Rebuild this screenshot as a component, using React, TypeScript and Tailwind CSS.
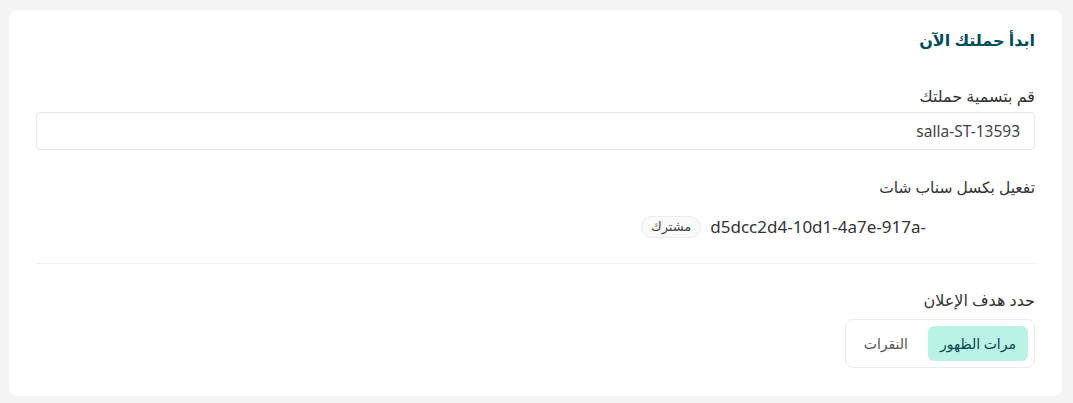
import React from 'react';

const App: React.FC = () => {
  return (
    <div className="min-h-[403px] w-full bg-[#f4f4f4] pt-[10px] pl-[9px] pr-[11px] font-['Noto_Sans','DejaVu_Sans',sans-serif]" dir="rtl">
      <div className="bg-white rounded-lg px-[27px] pt-[12px] pb-[28px]">
        <h2 className="text-[16px] leading-[36px] font-bold text-[#004d5a]">ابدأ حملتك الآن</h2>

        {/* campaign name */}
        <div className="mt-[27px]">
          <label className="block text-[16px] leading-[22px] text-[#333]">قم بتسمية حملتك</label>
          <input
            readOnly
            value="salla-ST-13593"
            dir="ltr"
            className="mt-[5px] w-full h-[38px] rounded border border-[#e8e8e8] px-[14px] text-right text-[15.5px] text-[#444] outline-none"
          />
        </div>

        {/* snapchat pixel */}
        <div className="mt-[26px]">
          <div className="text-[15.5px] leading-[22px] text-[#333]">تفعيل بكسل سناب شات</div>
          <div className="mt-[18px] flex items-center gap-[9px] pr-[109px]">
            <span dir="ltr" className="text-[17px] leading-[22px] text-[#333]">d5dcc2d4-10d1-4a7e-917a-</span>
            <span className="rounded-full border border-[#ececec] bg-[#fafafa] px-[9px] h-[22px] flex items-center text-[13px] text-[#444]">مشترك</span>
          </div>
        </div>

        <div className="mt-[25px] h-px bg-[#eeeeee]" />

        {/* objective */}
        <div className="mt-[25px]">
          <div className="text-[16px] leading-[22px] text-[#333]">حدد هدف الإعلان</div>
          <div className="mt-[8px] inline-flex items-center gap-[8px] rounded-lg border border-[#ebebeb] p-[6px]">
            <button className="h-[35px] rounded-md bg-[#baf3e6] px-[12px] text-[14px] text-[#00454f]">مرات الظهور</button>
            <button className="h-[35px] rounded-md px-[12px] text-[14px] text-[#555]">النقرات</button>
          </div>
        </div>
      </div>
    </div>
  );
};

export default App;
